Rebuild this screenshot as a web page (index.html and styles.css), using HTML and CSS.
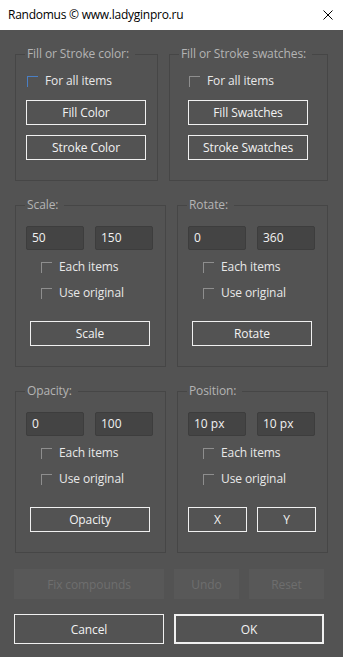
FILE: index.html
```html
<!DOCTYPE html>
<html lang="en">
<head>
<meta charset="utf-8">
<title>Randomus</title>
<link rel="stylesheet" href="styles.css">
</head>
<body>
<header class="titlebar">
  <span class="title">Randomus © www.ladyginpro.ru</span>
  <svg class="close" width="10" height="10" viewBox="0 0 10 10"><path d="M0.5 0.5L9.5 9.5M9.5 0.5L0.5 9.5" stroke="#000" stroke-width="1"/></svg>
</header>
<main class="dialog">
  <div class="row">
    <fieldset class="group g-color">
      <legend>Fill or Stroke color:</legend>
      <div class="stack">
        <label class="check"><span class="box focus"></span>For all items</label>
        <button class="btn">Fill Color</button>
        <button class="btn">Stroke Color</button>
      </div>
    </fieldset>
    <fieldset class="group g-swatch">
      <legend>Fill or Stroke swatches:</legend>
      <div class="stack">
        <label class="check"><span class="box"></span>For all items</label>
        <button class="btn">Fill Swatches</button>
        <button class="btn">Stroke Swatches</button>
      </div>
    </fieldset>
  </div>

  <div class="row">
    <fieldset class="group g-half">
      <legend>Scale:</legend>
      <div class="inner">
        <div class="inputs"><span class="field">50</span><span class="field">150</span></div>
        <div class="checks">
          <label class="check"><span class="box"></span>Each items</label>
          <label class="check"><span class="box"></span>Use original</label>
        </div>
        <button class="btn btn-wide">Scale</button>
      </div>
    </fieldset>
    <fieldset class="group g-half">
      <legend>Rotate:</legend>
      <div class="inner">
        <div class="inputs"><span class="field">0</span><span class="field">360</span></div>
        <div class="checks">
          <label class="check"><span class="box"></span>Each items</label>
          <label class="check"><span class="box"></span>Use original</label>
        </div>
        <button class="btn btn-wide">Rotate</button>
      </div>
    </fieldset>
  </div>

  <div class="row">
    <fieldset class="group g-half">
      <legend>Opacity:</legend>
      <div class="inner">
        <div class="inputs"><span class="field">0</span><span class="field">100</span></div>
        <div class="checks">
          <label class="check"><span class="box"></span>Each items</label>
          <label class="check"><span class="box"></span>Use original</label>
        </div>
        <button class="btn btn-wide">Opacity</button>
      </div>
    </fieldset>
    <fieldset class="group g-half">
      <legend>Position:</legend>
      <div class="inner">
        <div class="inputs"><span class="field">10 px</span><span class="field">10 px</span></div>
        <div class="checks">
          <label class="check"><span class="box"></span>Each items</label>
          <label class="check"><span class="box"></span>Use original</label>
        </div>
        <div class="pair"><button class="btn btn-small">X</button><button class="btn btn-small">Y</button></div>
      </div>
    </fieldset>
  </div>

  <div class="actions">
    <button class="btn-dis w-fix">Fix compounds</button>
    <button class="btn-dis w-undo">Undo</button>
    <button class="btn-dis w-reset">Reset</button>
  </div>
  <div class="actions">
    <button class="btn btn-main">Cancel</button>
    <button class="btn btn-main btn-ok">OK</button>
  </div>
</main>
</body>
</html>
```
FILE: styles.css
```css
* { box-sizing: border-box; }
html, body { margin: 0; padding: 0; }
body {
  width: 343px;
  height: 657px;
  background: #535353;
  font-family: "Open Sans", "Noto Sans", sans-serif;
  font-size: 12px;
  color: #e8e8e8;
  overflow: hidden;
}
.titlebar {
  height: 30px;
  background: #ffffff;
  display: flex;
  align-items: center;
  justify-content: space-between;
  padding: 0 10px 0 8px;
}
.title { color: #000; font-size: 12px; line-height: 16px; letter-spacing: -0.25px; }
.close { display: block; }

.dialog { padding: 16px 0 0 15px; }
.row { display: flex; gap: 11px; margin-bottom: 16px; }

.group {
  margin: 0;
  padding: 0 0 20px 0;
  min-width: 0;
  border: 1px solid #464646;
}
.group legend {
  margin-left: 9px;
  padding: 0 6px 0 2px;
  line-height: 16px;
  color: #b4b4b4;
  white-space: nowrap;
  letter-spacing: -0.1px;
}
.g-color { width: 143px; }
.g-swatch { width: 159px; }
.g-half { width: 151px; }
.g-color .stack { padding-left: 10px; }
.g-swatch .stack { padding-left: 18px; }
.inner { padding-left: 10px; }

.stack { display: flex; flex-direction: column; align-items: flex-start; margin-top: 11px; }
.stack .check { margin-left: 1px; margin-bottom: 11px; }
.stack .btn + .btn { margin-top: 10px; }

.check {
  display: flex;
  align-items: flex-start;
  height: 16px;
  line-height: 16px;
  white-space: nowrap;
  letter-spacing: -0.1px;
}
.box {
  width: 11px;
  height: 11px;
  margin: 3px 7px 0 0;
  border-top: 1px solid #8e8e8e;
  border-left: 1px solid #8e8e8e;
  flex: none;
}
.box.focus { border-color: #4a7fc4; }

.btn {
  display: block;
  width: 120px;
  height: 25px;
  padding: 0;
  background: transparent;
  border: 1px solid #f0f0f0;
  color: #f2f2f2;
  font: inherit;
  letter-spacing: -0.1px;
  line-height: 22px;
  text-align: center;
}

.inputs { display: flex; gap: 11px; margin-top: 13px; }
.field {
  width: 58px;
  height: 24px;
  background: #444444;
  border: 1px solid #3d3d3d;
  border-radius: 2px;
  padding-left: 5px;
  line-height: 22px;
  color: #f2f2f2;
}
.checks {
  display: flex;
  flex-direction: column;
  gap: 10px;
  margin: 9px 0 0 15px;
}
.btn-wide { margin: 20px 0 0 4px; }
.pair { display: flex; gap: 10px; margin-top: 20px; }
.btn-small { width: 59px; }

.actions { display: flex; gap: 10px; margin: 15px 0 0 -1px; }
.btn-dis {
  height: 30px;
  padding: 0;
  background: #585858;
  border: none;
  color: #6e6e6e;
  font: inherit;
  letter-spacing: -0.1px;
}
.w-fix { width: 150px; }
.w-undo { width: 65px; }
.w-reset { width: 75px; }
.btn-main { width: 150px; height: 30px; line-height: 27px; }
.btn-ok { border-width: 2px; line-height: 25px; }
```
